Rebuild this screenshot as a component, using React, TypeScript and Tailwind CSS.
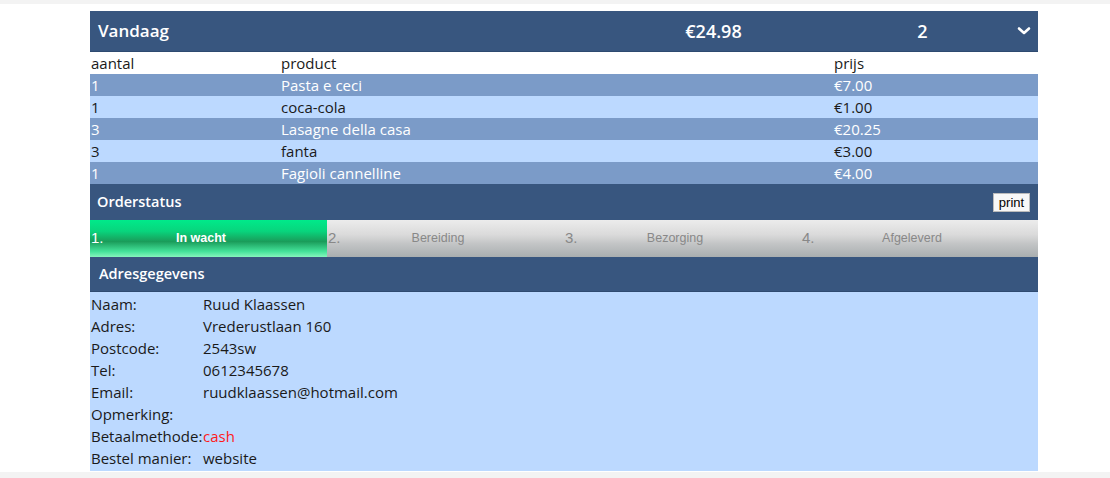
import React from 'react';

const ITEMS = [
  { qty: '1', name: 'Pasta e ceci', price: '€7.00' },
  { qty: '1', name: 'coca-cola', price: '€1.00' },
  { qty: '3', name: 'Lasagne della casa', price: '€20.25' },
  { qty: '3', name: 'fanta', price: '€3.00' },
  { qty: '1', name: 'Fagioli cannelline', price: '€4.00' },
];

const STEPS = ['In wacht', 'Bereiding', 'Bezorging', 'Afgeleverd'];

const ADDRESS = [
  { label: 'Naam:', value: 'Ruud Klaassen' },
  { label: 'Adres:', value: 'Vrederustlaan 160' },
  { label: 'Postcode:', value: '2543sw' },
  { label: 'Tel:', value: '0612345678' },
  { label: 'Email:', value: 'ruudklaassen@hotmail.com' },
  { label: 'Opmerking:', value: '' },
  { label: 'Betaalmethode:', value: 'cash', red: true },
  { label: 'Bestel manier:', value: 'website' },
];

export default function App() {
  return (
    <div className="w-[1110px] h-[478px] bg-white flex flex-col font-['Open_Sans',sans-serif] text-[#1a1a1a]">
      <div className="h-[4px] bg-[#f3f3f3]" />
      <div className="flex-1 pt-[7px] pl-[90px] pr-[72px]">
        {/* Header */}
        <div className="h-[41px] bg-[#38567f] border-b border-[#2e4a70] flex items-center text-white font-semibold text-[18px]">
          <span className="pl-[8px] w-[560px] shrink-0 text-[17px]">Vandaag</span>
          <span className="w-[127px] shrink-0 text-center">€24.98</span>
          <span className="w-[200px] shrink-0 text-center pl-[91px]">2</span>
          <svg className="ml-[40px] shrink-0" width="14" height="10" viewBox="0 0 14 10">
            <path d="M2 2.5 L7 7 L12 2.5" fill="none" stroke="white" strokeWidth="2.6" strokeLinecap="round" strokeLinejoin="round" />
          </svg>
        </div>

        {/* Items table */}
        <div className="text-[15px] leading-[22px]">
          <div className="flex h-[22px]">
            <span className="w-[191px] pl-[1px]">aantal</span>
            <span className="w-[553px]">product</span>
            <span>prijs</span>
          </div>
          {ITEMS.map((item, i) => (
            <div
              key={item.name}
              className={`flex h-[22px] ${i % 2 === 0 ? 'bg-[#7b9bc8] text-white' : 'bg-[#bcd9ff] text-[#1a1a1a]'}`}
            >
              <span className="w-[191px] pl-[1px]">{item.qty}</span>
              <span className="w-[553px]">{item.name}</span>
              <span>{item.price}</span>
            </div>
          ))}
        </div>

        {/* Orderstatus */}
        <div className="h-[36px] bg-[#38567f] flex items-center justify-between pl-[7px] pr-[8px] text-white font-semibold text-[14.5px]">
          <span>Orderstatus</span>
          <button className="h-[19px] w-[37px] bg-[#f7f7f7] border border-[#bbb] text-black text-[13px] leading-none font-['Liberation_Sans',sans-serif] font-normal">
            print
          </button>
        </div>
        <div className="flex h-[37px] font-['Liberation_Sans',sans-serif]">
          {STEPS.map((step, i) => (
            <div
              key={step}
              className={`flex-1 flex items-center ${
                i === 0
                  ? 'bg-[linear-gradient(#00ea8a_0%,#08d57d_30%,#1a9c5a_58%,#44e39a_85%,#86f6bd_100%)] text-white'
                  : 'bg-[linear-gradient(#ececec_0%,#dadada_40%,#c2c4c5_65%,#a9aeb0_100%)] text-[#888]'
              }`}
            >
              <span className="w-[40px] pl-[1px] text-[15px]">{i + 1}.</span>
              <span className={`w-[142px] text-center text-[12.5px] ${i === 0 ? 'font-bold' : ''}`}>{step}</span>
            </div>
          ))}
        </div>

        {/* Adresgegevens */}
        <div className="h-[35px] bg-[#38567f] border-b border-[#2e4a70] flex items-center pl-[9px] text-white font-semibold text-[14.5px]">
          Adresgegevens
        </div>
        <div className="bg-[#bcd9ff] text-[15px] leading-[22px] pt-[1px] pb-[2px]">
          {ADDRESS.map((row) => (
            <div key={row.label} className="flex h-[22px]">
              <span className="w-[113px] shrink-0 pl-[1px]">{row.label}</span>
              <span className={row.red ? 'text-[#ff1a1a]' : ''}>{row.value}</span>
            </div>
          ))}
        </div>
      </div>
      <div className="h-[6px] bg-[#f3f3f3]" />
    </div>
  );
}
